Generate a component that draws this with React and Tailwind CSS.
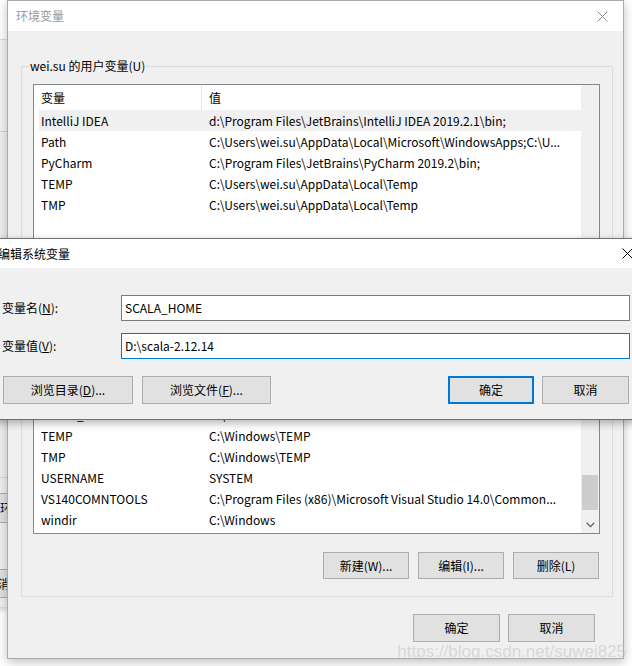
import React from 'react';

const CloseX = ({ color, size = 10 }) => (
  <svg width={size} height={size} viewBox={`0 0 ${size} ${size}`}>
    <path d={`M0.5 0.5L${size - 0.5} ${size - 0.5}M${size - 0.5} 0.5L0.5 ${size - 0.5}`} stroke={color} strokeWidth="1" fill="none" />
  </svg>
);

const Btn = ({ children, className = '' }) => (
  <div className={`flex items-center justify-center bg-[#e1e1e1] border border-[#adadad] ${className}`}>
    {children}
  </div>
);

const Row = ({ name, value, selected }) => (
  <div className={`ml-[5px] flex h-[21px] shrink-0 items-center ${selected ? 'bg-[#f0f0f0]' : ''}`}>
    <div className="w-[163px] shrink-0 whitespace-nowrap pl-[2px]">{name}</div>
    <div className="whitespace-nowrap pl-[7px]">{value}</div>
  </div>
);

const userVars = [
  ['IntelliJ IDEA', 'd:\\Program Files\\JetBrains\\IntelliJ IDEA 2019.2.1\\bin;', true],
  ['Path', 'C:\\Users\\wei.su\\AppData\\Local\\Microsoft\\WindowsApps;C:\\U...'],
  ['PyCharm', 'C:\\Program Files\\JetBrains\\PyCharm 2019.2\\bin;'],
  ['TEMP', 'C:\\Users\\wei.su\\AppData\\Local\\Temp'],
  ['TMP', 'C:\\Users\\wei.su\\AppData\\Local\\Temp'],
];

const sysVars = [
  ['SCALA_HOME', 'D:\\scala-2.12.14'],
  ['TEMP', 'C:\\Windows\\TEMP'],
  ['TMP', 'C:\\Windows\\TEMP'],
  ['USERNAME', 'SYSTEM'],
  ['VS140COMNTOOLS', 'C:\\Program Files (x86)\\Microsoft Visual Studio 14.0\\Common...'],
  ['windir', 'C:\\Windows'],
];

export default function App() {
  return (
    <div className="relative h-[666px] w-[632px] overflow-hidden bg-white font-['Noto_Sans_CJK_SC','Noto_Sans',sans-serif] text-[12px] leading-none text-black">
      {/* window in the back, only its right edge shows */}
      <div className="absolute left-[-120px] top-0 flex h-[607px] w-[128px] flex-col bg-[#f0f0f0] shadow-[0_2px_6px_rgba(0,0,0,0.2)]">
        <div className="h-[40px] shrink-0 border-b border-[#dadada] bg-white"></div>
        <div className="h-[92px] shrink-0 border-b border-[#d0d0d0] bg-[#f4f4f4]"></div>
        <div className="mt-[345px] h-[1px] shrink-0 bg-[#d8d8d8]"></div>
        <Btn className="ml-[20px] mt-[15px] h-[30px] w-[200px] shrink-0 !justify-start pl-[99px]">环境变量(N)...</Btn>
        <Btn className="ml-[20px] mt-[46px] h-[29px] w-[200px] shrink-0 !justify-start pl-[85px]">取消</Btn>
      </div>

      {/* 环境变量 window */}
      <div className="absolute left-[7px] top-0 flex h-[659px] w-[617px] flex-col border border-[#aaaaaa] bg-[#f0f0f0] shadow-[0_3px_10px_rgba(0,0,0,0.25)]">
        <div className="flex h-[30px] shrink-0 items-center justify-between bg-white pl-[8px]">
          <span className="text-[#999999]">环境变量</span>
          <div className="flex w-[42px] items-center justify-center">
            <CloseX color="#8a8a8a" size={11} />
          </div>
        </div>

        <div className="flex flex-1 flex-col pl-[13px] pr-[10px]">
          {/* user variables */}
          <div className="relative mt-[35px] flex h-[255px] shrink-0 flex-col border border-[#dcdcdc]">
            <span className="absolute left-[7px] top-[-7px] bg-[#f0f0f0] px-[1px]">wei.su 的用户变量(U)</span>
            <div className="ml-[11px] mr-[12px] mt-[17px] flex h-[170px] border border-[#828790] bg-white">
              <div className="flex flex-1 flex-col">
                <div className="flex h-[25px] shrink-0 items-center">
                  <div className="flex h-full w-[168px] items-center border-r border-[#e5e5e5] pl-[7px]">变量</div>
                  <div className="pl-[7px]">值</div>
                </div>
                {userVars.map(([n, v, s]) => (
                  <Row key={n + v} name={n} value={v} selected={s} />
                ))}
              </div>
              <div className="w-[18px] bg-[#f0f0f0]"></div>
            </div>
            <div className="mr-[13px] mt-[18px] flex justify-end gap-[9px]">
              <Btn className="h-[27px] w-[86px]">新建(N)...</Btn>
              <Btn className="h-[27px] w-[86px]">编辑(E)...</Btn>
              <Btn className="h-[27px] w-[86px]">删除(D)</Btn>
            </div>
          </div>

          {/* system variables */}
          <div className="relative mt-[17px] flex shrink-0 flex-col border border-[#dcdcdc] pb-[17px]">
            <span className="absolute left-[7px] top-[-7px] bg-[#f0f0f0] px-[1px]">系统变量(S)</span>
            <div className="ml-[11px] mr-[12px] mt-[17px] flex h-[178px] border border-[#828790] bg-white">
              <div className="flex flex-1 flex-col justify-end overflow-hidden pb-[3px]">
                {sysVars.map(([n, v]) => (
                  <Row key={n + v} name={n} value={v} />
                ))}
              </div>
              <div className="flex w-[18px] flex-col justify-end bg-[#f0f0f0]">
                <div className="mx-[1px] h-[35px] bg-[#cdcdcd]"></div>
                <div className="flex h-[23px] items-center justify-center pt-[6px]">
                  <svg width="9" height="6" viewBox="0 0 9 6">
                    <path d="M0.7 0.8L4.5 4.6L8.3 0.8" stroke="#606060" strokeWidth="1.3" fill="none" />
                  </svg>
                </div>
              </div>
            </div>
            <div className="mr-[13px] mt-[18px] flex justify-end gap-[9px]">
              <Btn className="h-[27px] w-[86px]">新建(W)...</Btn>
              <Btn className="h-[27px] w-[86px]">编辑(I)...</Btn>
              <Btn className="h-[27px] w-[86px]">删除(L)</Btn>
            </div>
          </div>

          <div className="mr-[18px] mt-[17px] flex justify-end gap-[8px]">
            <Btn className="h-[28px] w-[87px]">确定</Btn>
            <Btn className="h-[28px] w-[87px]">取消</Btn>
          </div>
        </div>
      </div>

      {/* 编辑系统变量 dialog */}
      <div className="absolute left-[-10px] top-[238px] flex h-[182px] w-[655px] flex-col border border-[#707070] bg-[#f0f0f0] shadow-[0_3px_8px_rgba(0,0,0,0.3)]">
        <div className="flex h-[29px] shrink-0 items-center justify-between bg-white pl-[7px]">
          <span>编辑系统变量</span>
          <div className="flex w-[34px] items-center justify-center">
            <CloseX color="#000000" size={11} />
          </div>
        </div>
        <div className="flex flex-1 flex-col pl-[11px] pr-[14px]">
          <div className="mt-[27px] flex items-center">
            <span className="w-[119px] shrink-0">变量名(<span className="underline">N</span>):</span>
            <div className="flex h-[26px] flex-1 items-center border border-[#7a7a7a] bg-white px-[3px]">SCALA_HOME</div>
          </div>
          <div className="mt-[12px] flex items-center">
            <span className="w-[119px] shrink-0">变量值(<span className="underline">V</span>):</span>
            <div className="flex h-[26px] flex-1 items-center border border-[#0078d7] bg-white px-[3px]">D:\scala-2.12.14</div>
          </div>
          <div className="mt-[17px] flex items-center">
            <Btn className="ml-[1px] h-[28px] w-[130px]">浏览目录(<span className="underline">D</span>)...</Btn>
            <Btn className="ml-[9px] h-[28px] w-[129px]">浏览文件(<span className="underline">F</span>)...</Btn>
            <div className="mr-[1px] flex flex-1 justify-end gap-[8px]">
              <Btn className="h-[28px] w-[86px] border-2 !border-[#0078d7]">确定</Btn>
              <Btn className="h-[28px] w-[87px]">取消</Btn>
            </div>
          </div>
        </div>
      </div>

      {/* watermark */}
      <div className="absolute bottom-[6px] right-[6px] font-['Liberation_Sans',sans-serif] text-[17px] text-[rgba(190,190,190,0.5)]">
        https://blog.csdn.net/suwei825
      </div>
    </div>
  );
}
